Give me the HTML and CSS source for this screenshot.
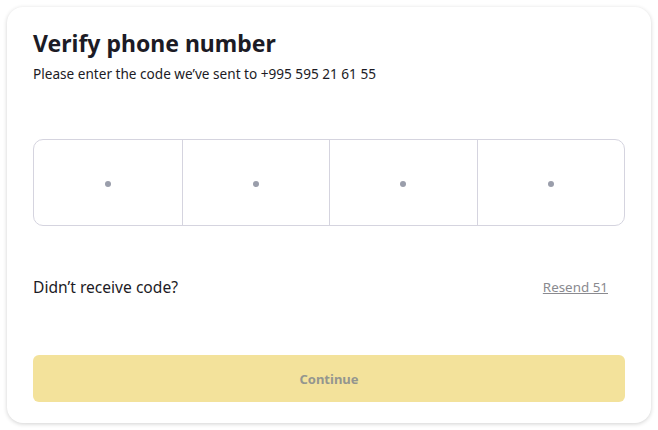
FILE: index.html
```html
<!DOCTYPE html>
<html>
<head>
    <meta charset="utf-8">
    <title>Verify phone number</title>
    <link rel="stylesheet" href="styles.css">
</head>
<body>
    <div class="card">
        <h1 class="title">Verify phone number</h1>
        <p class="subtitle">Please enter the code we’ve sent to +995 595 21 61 55</p>

        <div class="otp">
            <div class="otp-cell"><span class="dot"></span></div>
            <div class="otp-cell"><span class="dot"></span></div>
            <div class="otp-cell"><span class="dot"></span></div>
            <div class="otp-cell"><span class="dot"></span></div>
        </div>

        <div class="resend-row">
            <span class="resend-label">Didn’t receive code?</span>
            <a class="resend-link">Resend 51</a>
        </div>

        <button type="button" class="continue" disabled>Continue</button>
    </div>
</body>
</html>
```

FILE: styles.css
```css
body{
    margin: 0;
    padding: 7px 7px 7px 7px;
    background: #fff;
    font-family: "Noto Sans", "Open Sans", sans-serif;
    color: #1c1b25;
}
.card{
    height: 416px;
    box-sizing: border-box;
    padding: 22px 26px 21px 26px;
    border-radius: 16px;
    background: #fff;
    box-shadow: 0 1px 4px rgba(0,0,0,0.18);
    display: flex;
    flex-direction: column;
}
.title{
    margin: 0;
    font-size: 23px;
    font-weight: 700;
    line-height: 28px;
}
.subtitle{
    margin: 8px 0 0 0;
    font-size: 13.6px;
    line-height: 18px;
}
.otp{
    margin-top: 56px;
    height: 87px;
    display: grid;
    grid-template-columns: repeat(4, 1fr);
    border: 1px solid #d5d4df;
    border-radius: 10px;
    box-sizing: border-box;
}
.otp-cell{
    display: flex;
    align-items: center;
    justify-content: center;
    padding-top: 2px;
    border-left: 1px solid #d5d4df;
}
.otp-cell:first-child{
    border-left: none;
}
.dot{
    width: 6px;
    height: 6px;
    border-radius: 50%;
    background: #9a9eab;
}
.resend-row{
    margin-top: 50px;
    display: flex;
    justify-content: space-between;
    align-items: center;
    padding-right: 17px;
}
.resend-label{
    font-size: 15.6px;
    line-height: 22px;
}
.resend-link{
    font-size: 13.4px;
    color: #8a8a8f;
    text-decoration: underline;
}
.continue{
    margin-top: auto;
    height: 47px;
    border: none;
    border-radius: 6px;
    background: #f3e29b;
    color: #94968f;
    font-family: inherit;
    font-size: 13px;
    font-weight: 700;
}
```
